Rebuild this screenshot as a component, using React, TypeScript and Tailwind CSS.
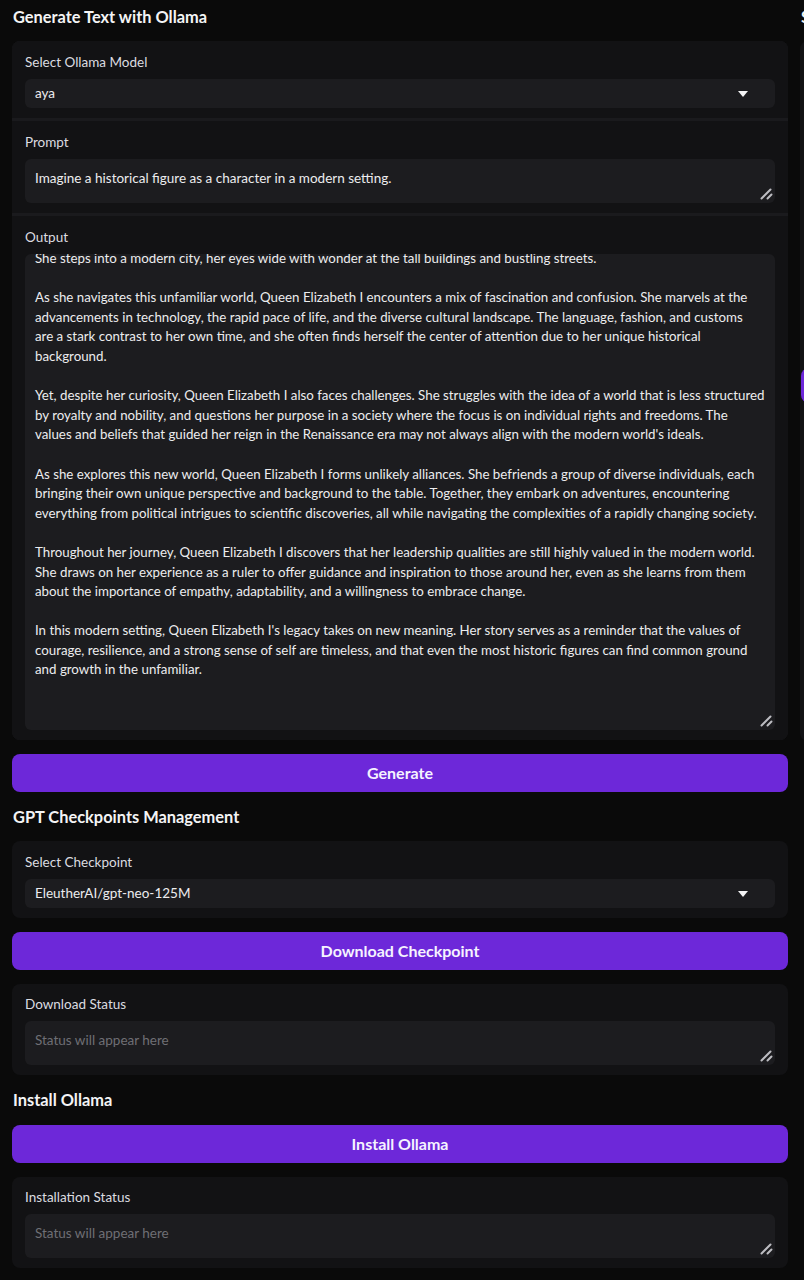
import React from 'react';

const FONT = { fontFamily: 'Lato, "Noto Sans", sans-serif' };

const outputLines = [
  'She steps into a modern city, her eyes wide with wonder at the tall buildings and bustling streets.',
  '',
  'As she navigates this unfamiliar world, Queen Elizabeth I encounters a mix of fascination and confusion. She marvels at the',
  'advancements in technology, the rapid pace of life, and the diverse cultural landscape. The language, fashion, and customs',
  'are a stark contrast to her own time, and she often finds herself the center of attention due to her unique historical',
  'background.',
  '',
  'Yet, despite her curiosity, Queen Elizabeth I also faces challenges. She struggles with the idea of a world that is less structured',
  'by royalty and nobility, and questions her purpose in a society where the focus is on individual rights and freedoms. The',
  "values and beliefs that guided her reign in the Renaissance era may not always align with the modern world's ideals.",
  '',
  'As she explores this new world, Queen Elizabeth I forms unlikely alliances. She befriends a group of diverse individuals, each',
  'bringing their own unique perspective and background to the table. Together, they embark on adventures, encountering',
  'everything from political intrigues to scientific discoveries, all while navigating the complexities of a rapidly changing society.',
  '',
  'Throughout her journey, Queen Elizabeth I discovers that her leadership qualities are still highly valued in the modern world.',
  'She draws on her experience as a ruler to offer guidance and inspiration to those around her, even as she learns from them',
  'about the importance of empathy, adaptability, and a willingness to embrace change.',
  '',
  "In this modern setting, Queen Elizabeth I's legacy takes on new meaning. Her story serves as a reminder that the values of",
  'courage, resilience, and a strong sense of self are timeless, and that even the most historic figures can find common ground',
  'and growth in the unfamiliar.',
];

function ResizeHandle() {
  return (
    <svg width="13" height="13" viewBox="0 0 13 13" className="absolute bottom-[3px] right-[2px]">
      <line x1="1.5" y1="11.5" x2="10.5" y2="2.5" stroke="#bdbdc2" strokeWidth="2" strokeLinecap="round" />
      <line x1="7.5" y1="11.5" x2="11.5" y2="7.5" stroke="#bdbdc2" strokeWidth="2" strokeLinecap="round" />
    </svg>
  );
}

function Caret() {
  return (
    <svg width="10" height="6" viewBox="0 0 10 6" className="shrink-0">
      <path d="M0 0 L10 0 L5 6 Z" fill="#f4f4f5" />
    </svg>
  );
}

function Label({ children }: { children: React.ReactNode }) {
  return <div className="mb-[7px] h-[20px] text-[13.5px] leading-[20px] text-[#dcdce0]">{children}</div>;
}

function Select({ value }: { value: string }) {
  return (
    <div className="flex h-[29px] items-center justify-between rounded-md bg-[#1c1c1f] pl-[10px] pr-[27px] text-[13.5px] text-[#ececee]">
      <span>{value}</span>
      <Caret />
    </div>
  );
}

function TextBox({ children, placeholder }: { children?: React.ReactNode; placeholder?: boolean }) {
  return (
    <div
      className={`relative h-[44px] rounded-md bg-[#1c1c1f] px-[10px] pt-[10px] text-[13.5px] leading-[19.6px] ${
        placeholder ? 'text-[#6f6f75]' : 'text-[#ececee]'
      }`}
    >
      {children}
      <ResizeHandle />
    </div>
  );
}

function Heading({ children }: { children: React.ReactNode }) {
  return <div className="flex h-[24px] items-center whitespace-nowrap pl-px text-[16.4px] font-bold text-[#f4f4f5]">{children}</div>;
}

function Button({ children }: { children: React.ReactNode }) {
  return (
    <button className="flex h-[38px] w-full items-center justify-center rounded-lg bg-[#6d28d9] text-[16px] font-bold text-[#f5f3ff]">
      {children}
    </button>
  );
}

export default function App() {
  return (
    <div className="flex h-[1280px] w-[804px] overflow-hidden bg-[#0a0a0a]" style={FONT}>
      <div className="flex w-[788px] shrink-0 flex-col pl-3 pt-[5px]">
        <Heading>Generate Text with Ollama</Heading>

        <div className="mt-[12px] flex flex-col gap-[3px] overflow-hidden rounded-lg bg-[#1a1a1d]">
          <div className="bg-[#121214] px-[13px] pb-[10px] pt-[11px]">
            <Label>Select Ollama Model</Label>
            <Select value="aya" />
          </div>
          <div className="bg-[#121214] px-[13px] pb-[10px] pt-[11px]">
            <Label>Prompt</Label>
            <TextBox>Imagine a historical figure as a character in a modern setting.</TextBox>
          </div>
          <div className="bg-[#121214] px-[13px] pb-[10px] pt-[11px]">
            <Label>Output</Label>
            <div className="relative h-[476px] overflow-hidden rounded-md bg-[#1c1c1f] px-[10px] text-[13.3px] leading-[19.6px] text-[#ececee]">
              <div className="-mt-[5px]">
                {outputLines.map((line, i) => (
                  <div key={i} className="h-[19.6px] whitespace-nowrap">
                    {line}
                  </div>
                ))}
              </div>
              <ResizeHandle />
            </div>
          </div>
        </div>

        <div className="mt-[14px]">
          <Button>Generate</Button>
        </div>

        <div className="mt-[13px]">
          <Heading>GPT Checkpoints Management</Heading>
        </div>

        <div className="mt-[12px] rounded-lg bg-[#121214] px-[13px] pb-[10px] pt-[11px]">
          <Label>Select Checkpoint</Label>
          <Select value="EleutherAI/gpt-neo-125M" />
        </div>

        <div className="mt-[14px]">
          <Button>Download Checkpoint</Button>
        </div>

        <div className="mt-[14px] rounded-lg bg-[#121214] px-[13px] pb-[10px] pt-[10px]">
          <Label>Download Status</Label>
          <TextBox placeholder>Status will appear here</TextBox>
        </div>

        <div className="mt-[13px]">
          <Heading>Install Ollama</Heading>
        </div>

        <div className="mt-[13px]">
          <Button>Install Ollama</Button>
        </div>

        <div className="mt-[14px] rounded-lg bg-[#121214] px-[13px] pb-[10px] pt-[10px]">
          <Label>Installation Status</Label>
          <TextBox placeholder>Status will appear here</TextBox>
        </div>
      </div>

      <div className="ml-3 flex w-[40px] shrink-0 flex-col pt-[5px]">
        <Heading>Settings</Heading>
        <div className="mt-[12px] flex h-[700px] flex-col rounded-lg bg-[#121214] pl-px pt-[327px]">
          <div className="h-[35px] rounded-lg bg-[#6d28d9]" />
        </div>
      </div>
    </div>
  );
}
